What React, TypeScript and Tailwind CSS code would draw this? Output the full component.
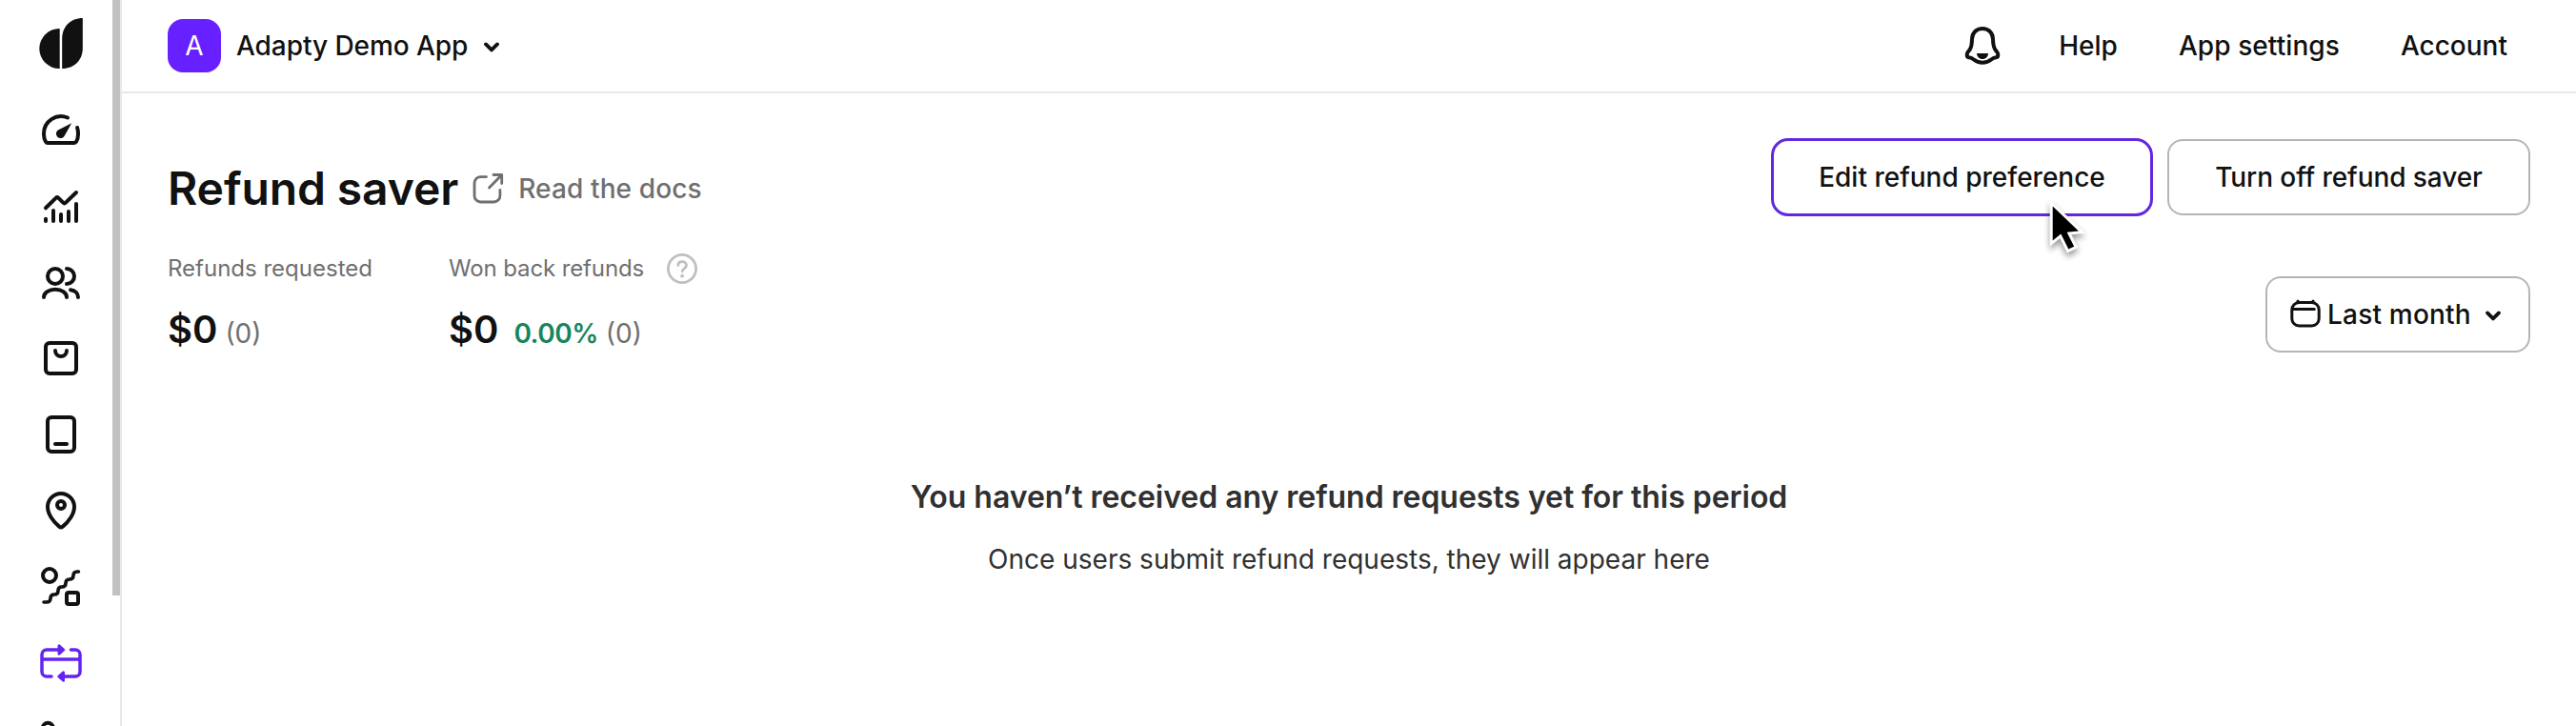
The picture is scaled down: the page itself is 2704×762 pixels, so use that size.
import type { ReactNode } from 'react';

function NavIcon({ children, active = false }: { children: ReactNode; active?: boolean }) {
  return (
    <a className={active ? 'block size-12 shrink-0 text-[#6424f0]' : 'block size-12 shrink-0 text-[#111111]'}>
      <svg
        viewBox="0 0 48 48"
        className="size-12"
        fill="none"
        stroke="currentColor"
        strokeWidth={active ? 3.5 : 4}
        strokeLinecap="round"
        strokeLinejoin="round"
      >
        {children}
      </svg>
    </a>
  );
}

function Chevron() {
  return (
    <svg viewBox="0 0 24 24" className="size-6 shrink-0" fill="none" stroke="currentColor" strokeWidth="3.8" strokeLinecap="round" strokeLinejoin="round">
      <path d="M6 9.4l6 6 6-6" />
    </svg>
  );
}

function Sidebar() {
  return (
    <aside className="flex h-full w-32 shrink-0 overflow-hidden border-r-2 border-[#e8e8e8]">
      <nav className="flex w-[118px] shrink-0 flex-col gap-8 pl-10">
        <svg viewBox="0 0 48 80" className="h-20 w-12 shrink-0 text-[#111111]" fill="currentColor">
          <path d="M22.7 30v42h-.4a21 21 0 0 1 0-42z" />
          <path d="M25.2 72V40.5C25.2 28 34 19 46.8 19v31.500C46.800 63 38 72 25.200 72z" />
        </svg>
        <NavIcon>
          <path d="M31 11.500A18 18 0 0 0 6 28v1c0 3 .8 5.800 2 7.800.5.8 1.200 1.200 2 1.200h28c.8 0 1.500-.4 2-1.200 1.200-2 2-4.800 2-7.800v-1c0-2-.3-4-.9-6" />
          <path d="M35.200 17.200L27.900 30.200A4.700 4.700 0 1 1 21 24.400z" fill="currentColor" stroke="none" />
        </NavIcon>
        <NavIcon>
          <path d="M8 26.300L18.600 15.900a2 2 0 0 1 2.800 0l4.800 4.700a2 2 0 0 0 2.800 0L40 10" />
          <path d="M8 37.700V40M16 29v11M24 33v7M32 30v10M40 22v18" />
        </NavIcon>
        <NavIcon>
          <circle cx="18" cy="18" r="8" />
          <path d="M30 10a8 8 0 0 1 0 16M6 40a12 8.200 0 0 1 24 0M34 32.300c5 .7 8 3.900 8 7.700" />
        </NavIcon>
        <NavIcon>
          <rect x="8" y="8" width="32" height="32" rx="4" />
          <path d="M18 16a6 6 0 0 0 12 0" />
        </NavIcon>
        <NavIcon>
          <rect x="10" y="6" width="28" height="36" rx="4" />
          <path d="M18 34h12" />
        </NavIcon>
        <NavIcon>
          <path d="M38 20c0 7.500-6 15.700-12.100 20.600a3 3 0 0 1-3.800 0C16 35.700 10 27.500 10 20a14 14 0 0 1 28 0z" />
          <circle cx="24" cy="18" r="4" />
        </NavIcon>
        <NavIcon>
          <circle cx="12" cy="12" r="7" />
          <rect x="30" y="30" width="12" height="12" rx="2" />
          <path d="M6 40h3q4 0 4-4t4-4 4-4 4-4 4-4 4-4 4-4 4-4h1.500" strokeWidth="3.600" />
        </NavIcon>
        <NavIcon active>
          <path d="M24 10H9a5 5 0 0 0-5 5v18a5 5 0 0 0 5 5h5M34.500 10H39a5 5 0 0 1 5 5v18a5 5 0 0 1-5 5H24M4 20h40" />
          <path d="M22 5.800l4.700 4.200-4.700 4.200zM26.500 33.800L21.800 38l4.700 4.200z" fill="currentColor" strokeWidth="3" />
        </NavIcon>
        <NavIcon>
          <circle cx="10.300" cy="12.300" r="5.500" />
        </NavIcon>
      </nav>
      <div className="h-[625px] w-2 shrink-0 bg-[#c1c1c1]" />
    </aside>
  );
}

function Header() {
  return (
    <header className="flex h-[98px] shrink-0 items-center justify-between border-b-2 border-[#e8e8e8] pr-[72px] pl-12 text-[28px]/10 font-medium">
      <button className="flex items-center">
        <span className="flex size-14 items-center justify-center rounded-2xl bg-[#6720ff] font-normal text-white">A</span>
        <span className="ml-4 tracking-[-0.06px] whitespace-nowrap">Adapty Demo App</span>
        <span className="mt-0.5 ml-[13px]">
          <Chevron />
        </span>
      </button>
      <div className="flex items-center gap-16 whitespace-nowrap">
        <svg viewBox="0 0 48 48" className="-mr-2 size-12" fill="none" stroke="currentColor" strokeWidth="4" strokeLinejoin="round">
          <path d="M24 6c-6.200 0-10.800 4.200-11 11-.1 5-.4 7.500-2 10.500-1.500 2.700-3.300 3.400-3.300 6 0 1.900 1.100 2.900 2.900 2.900 3.700 0 4.900 5.300 13.400 5.300s9.700-5.300 13.400-5.300c1.800 0 2.900-1 2.900-2.900 0-2.600-1.800-3.300-3.300-6-1.600-3-1.900-5.500-2-10.500-.2-6.800-4.800-11-11-11z" />
          <path d="M18 32h12c0 3.300-2.500 6-6 6s-6-2.700-6-6z" fill="currentColor" stroke="none" />
        </svg>
        <a>Help</a>
        <a className="tracking-[0.08px]">App settings</a>
        <a>Account</a>
      </div>
    </header>
  );
}

function Cursor() {
  return (
    <svg viewBox="0 0 56 76" className="absolute top-[57px] left-[287px] h-[76px] w-14 drop-shadow-[0_4px_3px_rgba(0,0,0,0.4)]">
      <path
        d="M8.700 14.500V50.500L17.300 43.500 25.300 59.500 31.200 56.700 23.600 41.700 35.900 40.500z"
        fill="#000"
        stroke="#fff"
        strokeWidth="6"
        paintOrder="stroke"
      />
    </svg>
  );
}

function Stats() {
  return (
    <div className="flex pt-px">
      <div className="flex w-[295px] flex-col gap-6">
        <div className="text-2xl/8 text-[#6f6f6f]">Refunds requested</div>
        <div className="flex items-baseline gap-2 text-[28px] text-[#6f6f6f]">
          <span className="text-[40px]/[48px] font-semibold text-[#111111]">$0</span>
          <span>(0)</span>
        </div>
      </div>
      <div className="flex flex-col gap-6">
        <div className="flex h-8 items-center text-2xl/8 text-[#6f6f6f]">
          <span className="tracking-[-0.12px]">Won back refunds</span>
          <svg viewBox="0 0 36 36" className="ml-[22px] size-9 shrink-0 text-[#c0c0c0]" fill="none" stroke="currentColor" strokeWidth="2.800" strokeLinecap="round" strokeLinejoin="round">
            <circle cx="18" cy="18" r="14.600" />
            <path d="M13.800 14.600c0-2.500 1.800-4 4.300-4s4.400 1.600 4.400 3.900c0 3.400-4.300 3.300-4.300 6.300" />
            <circle cx="18.100" cy="25.700" r="1.900" fill="currentColor" stroke="none" />
          </svg>
        </div>
        <div className="flex items-baseline text-[28px] text-[#6f6f6f]">
          <span className="text-[40px]/[48px] font-semibold text-[#111111]">$0</span>
          <span className="ml-4 font-semibold tracking-[-0.5px] text-[#17855c]">0.00%</span>
          <span className="ml-2">(0)</span>
        </div>
      </div>
    </div>
  );
}

export default function App() {
  return (
    <div className="flex h-[762px] w-full overflow-hidden bg-white font-['Inter',sans-serif] text-[#111111]">
      <Sidebar />
      <div className="flex min-w-0 flex-1 flex-col">
        <Header />
        <main className="flex flex-col pt-[47px] pr-12 pl-12">
          <div className="flex h-[82px] justify-between">
            <div className="flex h-14 items-center pt-[50px]">
              <h1 className="text-[48px]/[56px] font-semibold tracking-[-0.1px] whitespace-nowrap">Refund saver</h1>
              <a className="flex items-center text-[28px]/10 font-medium whitespace-nowrap text-[#6f6f6f]">
                <svg viewBox="0 0 36 36" className="ml-[13px] size-9 shrink-0" fill="none" stroke="currentColor" strokeWidth="2.800" strokeLinecap="round" strokeLinejoin="round">
                  <path d="M16.500 5.600H10.500a6.500 6.500 0 0 0-6.500 6.500v13.400a6.500 6.500 0 0 0 6.500 6.500h13.900a6.500 6.500 0 0 0 6.500-6.500v-6" />
                  <path d="M24 3.500h8.700v9M32 4.200L19.500 17" />
                </svg>
                <span className="ml-[14px] tracking-[0.12px]">Read the docs</span>
              </a>
            </div>
            <div className="flex items-center gap-[15px] text-[28px]/10 font-medium whitespace-nowrap">
              <div className="relative">
                <button className="flex h-[82px] w-[401px] items-center justify-center rounded-[18px] border-3 border-[#6427e0]">
                  Edit refund preference
                </button>
                <Cursor />
              </div>
              <button className="flex h-20 w-[381px] items-center justify-center rounded-2xl border-2 border-[#b5b5b5] tracking-[-0.08px]">
                Turn off refund saver
              </button>
            </div>
          </div>
          <div className="mt-[38px] flex items-start justify-between">
            <Stats />
            <button className="mt-[25px] flex h-20 w-[278px] items-center rounded-2xl border-2 border-[#b5b5b5] pl-5 text-[28px]/10 font-medium whitespace-nowrap">
              <svg viewBox="0 0 40 40" className="mb-1 size-10 shrink-0" fill="none" stroke="currentColor" strokeWidth="3" strokeLinecap="round">
                <rect x="5.800" y="9.500" width="28.400" height="24.500" rx="7.500" />
                <path d="M12 8v1M28 8v1M6.500 16.400h22.800" />
              </svg>
              <span className="ml-[3px] tracking-[0.2px]">Last month</span>
              <span className="mt-0.5 ml-[11px]">
                <Chevron />
              </span>
            </button>
          </div>
          <section className="mt-[131px] flex flex-col items-center gap-[25px] text-[#303030]">
            <h2 className="text-[32px]/10 font-semibold tracking-[-0.04px]">You haven’t received any refund requests yet for this period</h2>
            <p className="text-[28px]/10">Once users submit refund requests, they will appear here</p>
          </section>
        </main>
      </div>
    </div>
  );
}
